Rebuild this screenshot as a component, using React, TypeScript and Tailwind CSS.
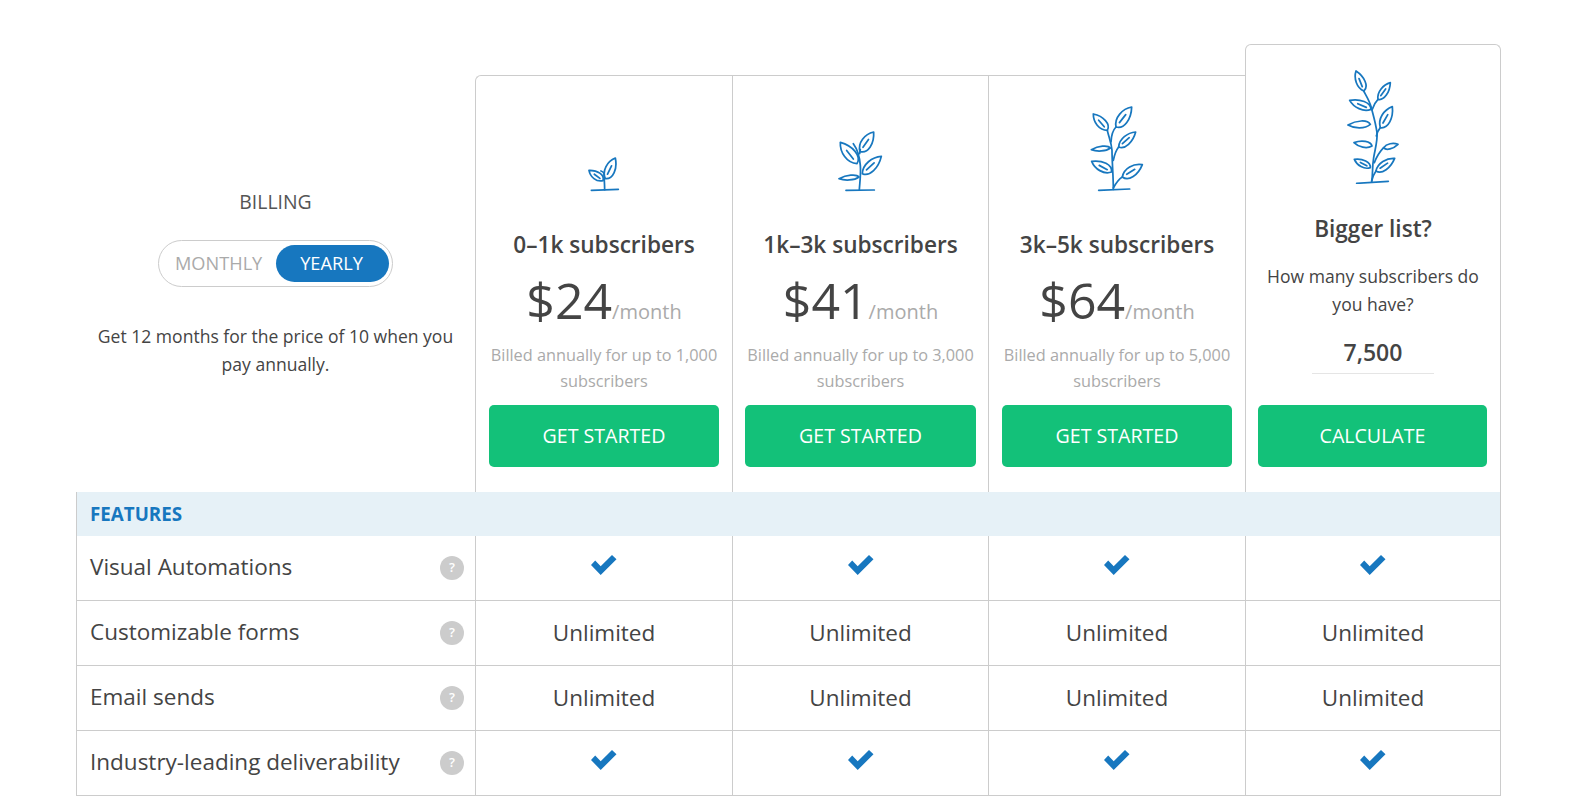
import React from "react";

type Pt = [number, number];
type LeafDef = { b: Pt; t: Pt; w: number };

function leafPath({ b, t, w }: LeafDef) {
  const dx = t[0] - b[0];
  const dy = t[1] - b[1];
  const len = Math.hypot(dx, dy) || 1;
  const ux = -dy / len;
  const uy = dx / len;
  const at = (f: number, o: number) => `${b[0] + dx * f + ux * o} ${b[1] + dy * f + uy * o}`;
  const outline = `M${at(0, 0)}C${at(0.12, w * 0.8)} ${at(0.62, w * 0.72)} ${at(1, 0)}C${at(0.72, -w * 0.62)} ${at(0.25, -w * 0.72)} ${at(0, 0)}`;
  return w < 20 ? outline : `${outline}M${at(0.22, 0)}L${at(0.62, 0)}`;
}

function Plant({ box, stems, leaves }: { box: [number, number, number, number]; stems: string[]; leaves: LeafDef[] }) {
  return (
    <svg
      width={box[2] / 3}
      height={box[3] / 3}
      viewBox={box.join(" ")}
      fill="none"
      stroke="#1777bf"
      strokeWidth={5.2}
      strokeLinecap="round"
      strokeLinejoin="round"
    >
      {stems.map((d) => (
        <path key={d} d={d} />
      ))}
      {leaves.map((l) => (
        <path key={l.t.join()} d={leafPath(l)} />
      ))}
    </svg>
  );
}

const Plant1 = () => (
  <Plant
    box={[355, 290, 95, 105]}
    stems={["M365 390L446 387", "M405 388C405 370 403 350 403 340C402 336 398 333 394 332"]}
    leaves={[
      { b: [407, 355], t: [437, 293], w: 28 },
      { b: [400, 361], t: [358, 330], w: 22 },
    ]}
  />
);

const Plant2 = () => (
  <Plant
    box={[1105, 212, 133, 183]}
    stems={["M1129 390L1214 389", "M1169 388C1171 360 1174 340 1172 315C1170 290 1162 265 1151 250", "M1170 280L1172 268"]}
    leaves={[
      { b: [1171, 274], t: [1212, 215], w: 30 },
      { b: [1162, 310], t: [1112, 246], w: 32 },
      { b: [1178, 340], t: [1235, 288], w: 28 },
      { b: [1168, 350], t: [1108, 355], w: 13 },
    ]}
  />
);

const Plant3 = () => (
  <Plant
    box={[120, 212, 160, 258]}
    stems={[
      "M146 465L239 461",
      "M190 462C190 420 186 380 186 345C184 320 176 305 172 285",
      "M183 320C184 300 188 285 198 275",
      "M190 375C193 360 198 345 206 335",
      "M190 458C197 445 205 432 217 425",
    ]}
    leaves={[
      { b: [172, 285], t: [130, 236], w: 26 },
      { b: [198, 275], t: [245, 215], w: 30 },
      { b: [206, 335], t: [257, 290], w: 24 },
      { b: [181, 338], t: [124, 343], w: 13 },
      { b: [185, 410], t: [125, 378], w: 26 },
      { b: [217, 425], t: [277, 388], w: 28 },
    ]}
  />
);

const Plant4 = () => (
  <Plant
    box={[890, 107, 156, 343]}
    stems={[
      "M919 447L1014 441",
      "M964 443C968 420 965 400 970 370C975 340 982 320 980 295C976 265 968 240 963 220C958 200 948 185 940 170",
      "M966 225C970 212 976 202 983 195",
      "M978 305C980 295 984 287 990 280",
      "M972 385C980 365 990 350 1000 340",
      "M964 440C967 428 971 418 977 410",
    ]}
    leaves={[
      { b: [941, 170], t: [917, 110], w: 24 },
      { b: [983, 195], t: [1020, 145], w: 22 },
      { b: [962, 225], t: [898, 198], w: 24 },
      { b: [990, 280], t: [1026, 217], w: 28 },
      { b: [960, 270], t: [893, 272], w: 19 },
      { b: [965, 335], t: [911, 325], w: 17 },
      { b: [1000, 340], t: [1043, 330], w: 14 },
      { b: [960, 400], t: [912, 375], w: 20 },
      { b: [977, 410], t: [1033, 372], w: 24 },
    ]}
  />
);

const Check = () => (
  <svg width="26" height="20" viewBox="0 0 26 20" className="mb-[6px]">
    <path d="M0 10L4.2 5.6L9.7 11.3L21 0L25.5 4.3L9.7 20Z" fill="#1777bf" />
  </svg>
);

function PlanCol({ plant, title, price, billed, width, buttonWidth, first }: { plant: React.ReactNode; title: string; price: string; billed: string; width: string; buttonWidth: string; first?: boolean }) {
  return (
    <div className={`${width} h-[417px] border-t border-l border-[#ccc] flex flex-col items-center ${first ? "rounded-tl-md" : ""}`}>
      <div className="h-[116px] flex items-end justify-center">{plant}</div>
      <div className="mt-[38px] text-[22.6px] leading-[30px] font-semibold text-[#444] whitespace-nowrap">{title}</div>
      <div className="mt-[12px] h-[56px] flex items-baseline text-[#444]">
        <span className="text-[50px] leading-[56px]">{price}</span>
        <span className="text-[20px] text-[#aaa]">/month</span>
      </div>
      <div className="mt-[14px] w-[244px] text-center text-[16.3px] leading-[26px] text-[#aaa]">{billed}</div>
      <button className={`mt-[11px] ${buttonWidth} h-[62px] shrink-0 rounded-[5px] bg-[#13c179] text-white text-[19.6px]`}>GET STARTED</button>
    </div>
  );
}

const rows: { label: string; value: "check" | "Unlimited" }[] = [
  { label: "Visual Automations", value: "check" },
  { label: "Customizable forms", value: "Unlimited" },
  { label: "Email sends", value: "Unlimited" },
  { label: "Industry-leading deliverability", value: "check" },
];

const widths = ["w-[257px]", "w-[256px]", "w-[257px]", "w-[256px]"];

export default function App() {
  return (
    <div className="h-[797px] overflow-hidden bg-white pt-[44px] pl-[76px] font-['Open_Sans',sans-serif] text-[#444]">
      <div className="w-[1425px]">
        <div className="flex items-end">
          <div className="w-[399px] h-[417px] flex flex-col items-center">
            <div className="mt-[112px] text-[19.4px] leading-[30px] font-medium text-[#555]">BILLING</div>
            <div className="mt-[23px] w-[235px] h-[47px] rounded-full border border-[#ccc] flex items-center justify-between pl-[16px] pr-[3px]">
              <span className="text-[18.2px] text-[#aaa]">MONTHLY</span>
              <span className="w-[113px] h-[37px] pr-[2px] rounded-full bg-[#1777bf] text-white text-[18.2px] flex items-center justify-center">YEARLY</span>
            </div>
            <p className="mt-[35px] w-[370px] text-center text-[17.55px] leading-[28px] text-[#444]">
              Get 12 months for the price of 10 when you pay annually.
            </p>
          </div>
          <PlanCol first width="w-[257px]" buttonWidth="w-[230px]" plant={<Plant1 />} title="0–1k subscribers" price="$24" billed="Billed annually for up to 1,000 subscribers" />
          <PlanCol width="w-[256px]" buttonWidth="w-[231px]" plant={<Plant2 />} title="1k–3k subscribers" price="$41" billed="Billed annually for up to 3,000 subscribers" />
          <PlanCol width="w-[257px]" buttonWidth="w-[230px]" plant={<Plant3 />} title="3k–5k subscribers" price="$64" billed="Billed annually for up to 5,000 subscribers" />
          <div className="w-[256px] h-[448px] border-t border-l border-r border-[#ccc] rounded-t-md flex flex-col items-center">
            <div className="mt-[25px]"><Plant4 /></div>
            <div className="mt-[30px] text-[22.6px] leading-[30px] font-semibold">Bigger list?</div>
            <p className="mt-[18px] w-[225px] text-center text-[17.55px] leading-[28px]">How many subscribers do you have?</p>
            <div className="mt-[16px] w-[122px] h-[40px] border-b border-[#e5e5e5] text-center text-[23px] leading-[36px] font-semibold">7,500</div>
            <button className="mt-[31px] mr-[1px] pb-[2px] w-[229px] h-[62px] shrink-0 rounded-[5px] bg-[#13c179] text-white text-[19.6px]">CALCULATE</button>
          </div>
        </div>
        <div className="h-[44px] bg-[#e6f1f7] border-x border-[#ccc] pl-[13px] flex items-center text-[18.8px] font-bold text-[#1777bf]">FEATURES</div>
        {rows.map((r) => (
          <div key={r.label} className="flex h-[65px] border-b border-[#ccc]">
            <div className="w-[399px] border-l border-[#ccc] pl-[13px] pr-[11px] flex items-center justify-between">
              <span className="text-[22.5px] text-[#444] mb-[3px]">{r.label}</span>
              <span className="w-[24px] h-[24px] rounded-full bg-[#ccc] text-white text-[13px] font-semibold flex items-center justify-center">?</span>
            </div>
            {widths.map((w, i) => (
              <div key={i} className={`${w} border-l border-[#ccc] flex items-center justify-center ${i === 3 ? "border-r" : ""}`}>
                {r.value === "check" ? <Check /> : <span className="text-[22.5px] text-[#444] mb-[1px]">{r.value}</span>}
              </div>
            ))}
          </div>
        ))}
      </div>
    </div>
  );
}
